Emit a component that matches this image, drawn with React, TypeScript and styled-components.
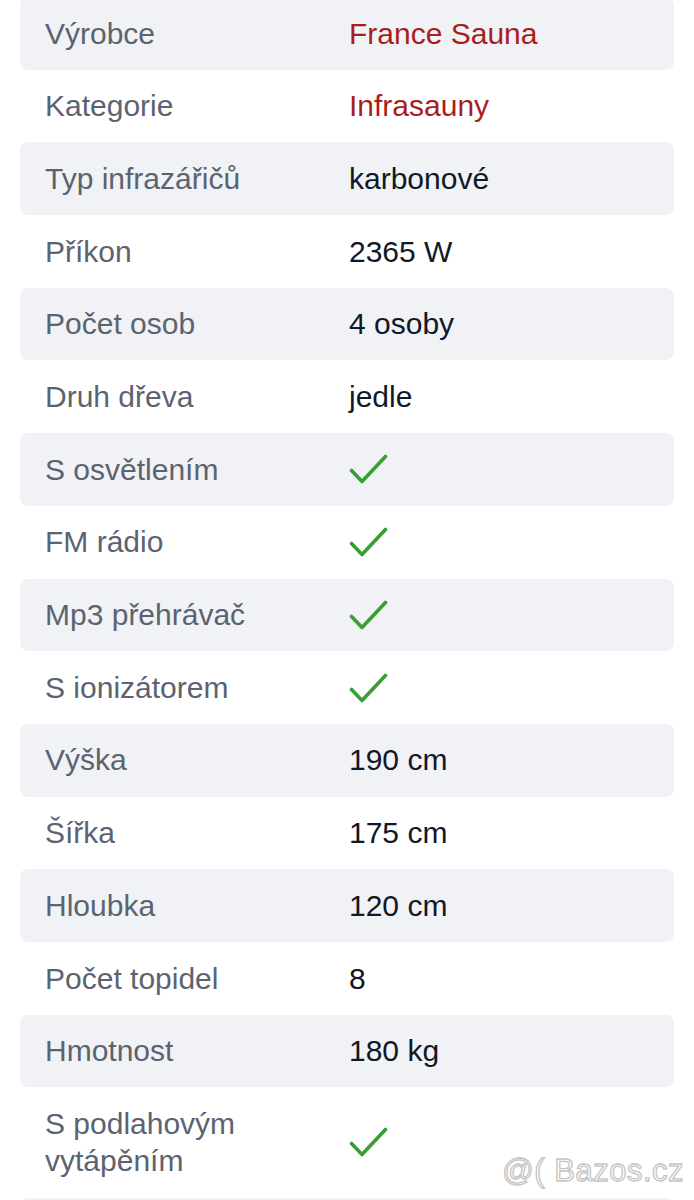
import React from "react";
import styled, { createGlobalStyle } from "styled-components";

const Global = createGlobalStyle`
  html, body { margin: 0; padding: 0; background: #ffffff; }
  body { font-family: "Liberation Sans", Arial, Helvetica, sans-serif; overflow: hidden; }
`;

const Page = styled.div`
  position: relative;
  padding: 0 20px;
  height: 1200px;
  overflow: hidden;
`;

const List = styled.div`
  display: flex;
  flex-direction: column;
  margin-top: -3px;
`;

const Row = styled.div<{ $shaded: boolean }>`
  display: grid;
  grid-template-columns: 304px 1fr;
  align-items: center;
  min-height: 72.7px;
  box-sizing: border-box;
  padding: 17.6px 25px;
  line-height: 37.5px;
  font-size: 30px;
  border-radius: 8px;
  background: ${(p) => (p.$shaded ? "#f0f2f5" : "transparent")};
`;

const Label = styled.div`
  color: #5c6370;
  padding-right: 40px;
`;

const Value = styled.div<{ $tone?: "red" | "dark" }>`
  color: ${(p) => (p.$tone === "red" ? "#a91d1d" : "#111827")};
  display: flex;
  align-items: center;
`;

const Watermark = styled.div`
  position: absolute;
  right: 10px;
  top: 1153px;
  font-family: "Liberation Sans", Arial, sans-serif;
  font-size: 31px;
  color: #ffffff;
  -webkit-text-stroke: 1.3px #c4c4c4;
  letter-spacing: 0.5px;
  white-space: pre;
`;

const Check = () => (
  <svg width="40" height="32" viewBox="0 0 40 32" style={{ display: "block" }}>
    <path
      d="M2.5 17.5 L13 28.5 L36.5 3.5"
      fill="none"
      stroke="#3a9e35"
      strokeWidth="3.6"
      strokeLinecap="round"
      strokeLinejoin="round"
    />
  </svg>
);

type Item = { label: string; value?: string; tone?: "red" | "dark"; check?: boolean };

const items: Item[] = [
  { label: "Výrobce", value: "France Sauna", tone: "red" },
  { label: "Kategorie", value: "Infrasauny", tone: "red" },
  { label: "Typ infrazářičů", value: "karbonové" },
  { label: "Příkon", value: "2365 W" },
  { label: "Počet osob", value: "4 osoby" },
  { label: "Druh dřeva", value: "jedle" },
  { label: "S osvětlením", check: true },
  { label: "FM rádio", check: true },
  { label: "Mp3 přehrávač", check: true },
  { label: "S ionizátorem", check: true },
  { label: "Výška", value: "190 cm" },
  { label: "Šířka", value: "175 cm" },
  { label: "Hloubka", value: "120 cm" },
  { label: "Počet topidel", value: "8" },
  { label: "Hmotnost", value: "180 kg" },
  { label: "S podlahovým vytápěním", check: true },
  { label: "" },
];

export default function App() {
  return (
    <>
      <Global />
      <Page>
        <List>
          {items.map((it, i) => (
            <Row key={i} $shaded={i % 2 === 0}>
              <Label>{it.label}</Label>
              <Value $tone={it.tone}>{it.check ? <Check /> : it.value}</Value>
            </Row>
          ))}
        </List>
        <Watermark>{"@( Bazos.cz"}</Watermark>
      </Page>
    </>
  );
}
